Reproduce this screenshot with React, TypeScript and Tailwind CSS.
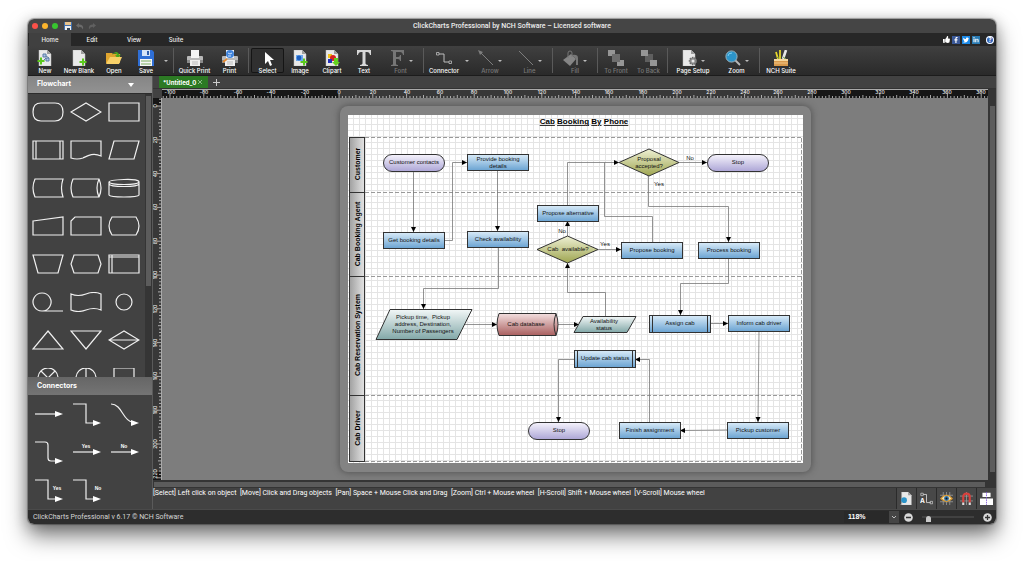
import type { ReactNode } from "react";
import { FaFacebookF, FaLinkedinIn, FaThumbsUp, FaTwitter } from "react-icons/fa";

const DocPage = ({ children }: { children?: ReactNode }) => (
  <svg viewBox="0 0 16 16" className="h-4 w-4" aria-hidden="true">
    <path d="M2 0h8l4 4v12H2z" fill="#e9e9e9" stroke="#bdbdbd" strokeWidth=".5" />
    <path d="M10 0v4h4z" fill="#9d9d9d" />
    {children}
  </svg>
);

const Icon = ({ children }: { children: ReactNode }) => (
  <svg viewBox="0 0 16 16" className="h-4 w-4" fill="none" aria-hidden="true">
    {children}
  </svg>
);

const Plus = ({ x, y }: { x: number; y: number }) => (
  <path d={`M${x - 3.5} ${y}h7M${x} ${y - 3.5}v7`} stroke="#5cc81e" strokeWidth="2" />
);

const Printer = ({ children }: { children?: ReactNode }) => (
  <Icon>
    <path d="M4 0h8v8H4z" fill="#f4f4f4" />
    <path d="M0 7q0-1 1-1h3v2h8V6h3q1 0 1 1v5H0z" fill="#b9b9b9" />
    <path d="M0 10h16v3H0z" fill="#8b8b8b" />
    <path d="M3 10h10v6H3z" fill="#efefef" />
    <path d="M5 12h6M5 14h6" stroke="#999" strokeWidth=".6" />
    {children}
  </Icon>
);

const icons = {
  new: (
    <DocPage>
      <path d="M6 4h3v3H6zM9 8h3v3H9zM6 11l3-3M9 6l3 2" stroke="#5b7ba5" strokeWidth="1" fill="#a9c3e2" />
      <Plus x={4} y={11} />
    </DocPage>
  ),
  newBlank: (
    <DocPage>
      <Plus x={12} y={12} />
    </DocPage>
  ),
  open: (
    <Icon>
      <path d="M0 3h6l1 1h7v9H0z" fill="#e0a52f" />
      <path d="M6 5c3-5 7-3 7 0l2-.5-3 4-3-3 2-.4c-1-2-3-2-5 0z" fill="#4aa81e" />
      <path d="M0 14 4 7h12l-3 7z" fill="#f8d068" />
    </Icon>
  ),
  save: (
    <Icon>
      <path d="M0 0h14l2 2v14H0z" fill="#2f6fd6" />
      <path d="M4 0h8v6H4z" fill="#d6e4f8" />
      <path d="M9 1h2v4H9z" fill="#2f5fae" />
      <path d="M2 9h12v7H2z" fill="#f6f6f6" />
      <path d="M3 11h10M3 14h10" stroke="#7cae5c" />
    </Icon>
  ),
  quickPrint: <Printer />,
  print: (
    <Printer>
      <circle cx="8" cy="4" r="4" fill="#3f83dc" />
      <path d="M6 3l2 1 2-1M6 6h3" stroke="#cfe4ff" />
      <path d="M1 12l4-3" stroke="#e8892c" strokeWidth="1.6" />
    </Printer>
  ),
  select: (
    <Icon>
      <path d="M5 2v12l3-3 2 5 2-1-2-5h4z" fill="#fff" />
    </Icon>
  ),
  image: (
    <DocPage>
      <path d="M4 5h7v6H4z" fill="#6ca9ee" />
      <circle cx="7" cy="8" r="2.4" fill="#1d5fc0" />
      <Plus x={12} y={12} />
    </DocPage>
  ),
  clipart: (
    <DocPage>
      <path d="M4 4h4v4H4z" fill="#f3c31b" />
      <circle cx="9" cy="8" r="3" fill="#d8231f" />
      <path d="M4 9h4v4H4z" fill="#2330b8" />
      <path d="M10 8h4v4h2l-4 4-4-4h2z" fill="#64d21e" />
    </DocPage>
  ),
  text: (
    <Icon>
      <path d="M1 0h14v5h-1q-.5-3-3-3H9.5v11.5q0 1.3 2.5 1.5v1H4v-1q2.5-.2 2.5-1.5V2H5Q2.5 2 2 5H1z" fill="#d8d8d8" />
    </Icon>
  ),
  font: (
    <Icon>
      <path d="M2 0h13v5h-1q-.5-3-3-3H7v5h2q2 0 2-2h1v6h-1q0-2-2-2H7v5q0 1 2 1v1H2v-1q2 0 2-1V2q0-1-2-1z" fill="#767676" />
    </Icon>
  ),
  connector: (
    <Icon>
      <path d="M3 4h5v8h5" stroke="#bdbdbd" />
      <path d="M.5 2.5H3V5H.5zM13 11h2.5v2.5H13z" stroke="#bdbdbd" strokeWidth=".8" />
    </Icon>
  ),
  arrow: (
    <Icon>
      <path d="M1 1l14 14" stroke="#7d7d7d" />
      <path d="M0 0l5 2-3 3z" fill="#7d7d7d" />
    </Icon>
  ),
  line: (
    <Icon>
      <path d="M1 1l14 14" stroke="#7d7d7d" />
    </Icon>
  ),
  fill: (
    <Icon>
      <path d="M0 10 8 4l5 5-6 7z" fill="#858585" />
      <path d="M5 8V3q0-2 2-2t2 2v4" stroke="#777" />
      <path d="M9 5q6-1 6 3v7h-2V9z" fill="#777" />
    </Icon>
  ),
  toFront: (
    <Icon>
      <path d="M0 0h7v6H0zM9 10h7v6H9z" fill="#969696" />
      <path d="M4 4h8v8H4z" fill="#6d6d6d" />
    </Icon>
  ),
  toBack: (
    <Icon>
      <path d="M4 4h8v8H4z" fill="#5f5f5f" />
      <path d="M0 0h7v6H0zM9 10h7v6H9z" fill="#969696" />
    </Icon>
  ),
  pageSetup: (
    <DocPage>
      <circle cx="12" cy="11" r="3.5" fill="#8d8d8d" stroke="#6b6b6b" strokeDasharray="1.5 1" strokeWidth="1.5" />
      <circle cx="12" cy="11" r="1.5" fill="#e6e6e6" />
    </DocPage>
  ),
  zoom: (
    <Icon>
      <path d="M10 10l5 5" stroke="#b9b9b9" strokeWidth="1.8" />
      <circle cx="6.5" cy="6.5" r="5.6" fill="#2c94c9" stroke="#9ab2bd" />
      <path d="M3 6q0-3 4-3" stroke="#7ed0f2" />
    </Icon>
  ),
  suite: (
    <Icon>
      <path d="M3 2l2 7M7 0v9" stroke="#e6d62a" strokeWidth="1.8" />
      <path d="M13 0 10 9" stroke="#e8e8e8" strokeWidth="2.6" />
      <path d="M4 7l3 3M10 7l3 2" stroke="#7aa64c" />
      <path d="M1 9h14v7H1z" fill="#d99a4c" />
      <path d="M1 9h14v2H1z" fill="#f6d9a0" />
      <path d="M1 13h14" stroke="#f0c485" />
    </Icon>
  ),
};

const Caret = () => (
  <svg viewBox="0 0 4 2" className="h-0.5 w-1 shrink-0" aria-hidden="true">
    <path d="M0 0h4L2 2z" fill="#bbb" />
  </svg>
);

type ToolProps = {
  icon: ReactNode;
  label: string;
  width: string;
  menu?: boolean;
  dim?: boolean;
  active?: boolean;
};

const Tool = ({ icon, label, width, menu, dim, active }: ToolProps) => (
  <button
    type="button"
    disabled={dim}
    className={`my-0.5 flex shrink-0 flex-col items-center whitespace-nowrap pt-0.5 ${width} ${
      dim ? "text-[#7a7a7a]" : "text-white"
    } ${active ? "rounded-xs bg-[#303030] ring-1 ring-inset ring-[#151515]" : ""}`}
  >
    <span className="flex items-center gap-1">
      {icon}
      {menu && (
        <span className="pt-1.5">
          <Caret />
        </span>
      )}
    </span>
    <span className="mt-px leading-2">{label}</span>
  </button>
);

const MenuCaret = ({ label, width }: { label: string; width: string }) => (
  <button type="button" aria-label={label} className={`flex shrink-0 items-center justify-center ${width}`}>
    <Caret />
  </button>
);

const Divider = () => <div className="mx-0.5 my-0.5 w-px shrink-0 bg-[#5a5a5a]" />;

const TitleBar = () => (
  <header className="grid h-3.5 grid-cols-[1fr_auto_1fr] items-center bg-[#454545]">
    <div className="flex items-center gap-1 pl-1">
      <button type="button" aria-label="Close" className="h-1.5 w-1.5 rounded-full bg-[#fb5149]" />
      <button type="button" aria-label="Minimize" className="h-1.5 w-1.5 rounded-full bg-[#fbb42c]" />
      <button type="button" aria-label="Full screen" className="h-1.5 w-1.5 rounded-full bg-[#38c52f]" />
      <button type="button" aria-label="Save" className="ml-0.5">
        <svg viewBox="0 0 8 8" className="h-2 w-2">
          <path d="M0 0h8v8H0z" fill="#3f6fae" />
          <path d="M1 0h6v3H1z" fill="#e8c38c" />
          <path d="M1 4h6v4H1z" fill="#eee" />
          <path d="M3 6h3v2H3z" fill="#345" />
        </svg>
      </button>
      <button type="button" aria-label="Undo">
        <svg viewBox="0 0 8 8" className="h-2 w-2">
          <path d="M0 3.5 3 1v1.5q5 0 4 5-1-3-4-2.8V6z" fill="#6b6b6b" />
        </svg>
      </button>
      <button type="button" aria-label="Redo">
        <svg viewBox="0 0 8 8" className="h-2 w-2">
          <path d="M8 3.5 5 1v1.5q-5 0-4 5 1-3 4-2.8V6z" fill="#606060" />
        </svg>
      </button>
    </div>
    <h1 className="font-[Roboto,sans-serif] text-[7px] font-medium text-[#eee]">
      ClickCharts Professional by NCH Software – Licensed software
    </h1>
  </header>
);

const MenuTabs = () => (
  <nav className="flex h-[13px] items-stretch bg-[#272727] pl-px">
    {["Home", "Edit", "View", "Suite"].map((tab, i) => (
      <button
        key={tab}
        type="button"
        className={`w-[42px] font-medium text-[#eee] ${i === 0 ? "bg-[#404040]" : ""}`}
      >
        {tab}
      </button>
    ))}
    <div className="ml-auto flex items-center gap-0.5 pr-0.5 text-white">
      <a href="#like" aria-label="Like" className="flex h-2 w-2 items-center justify-center">
        <FaThumbsUp size={7} />
      </a>
      <a href="#facebook" aria-label="Facebook" className="flex h-2 w-2 items-center justify-center bg-[#3b5998]">
        <FaFacebookF size={6} />
      </a>
      <a href="#twitter" aria-label="Twitter" className="flex h-2 w-2 items-center justify-center bg-[#1b8ae8]">
        <FaTwitter size={6} />
      </a>
      <a href="#linkedin" aria-label="LinkedIn" className="flex h-2 w-2 items-center justify-center bg-[#2a7cb5]">
        <FaLinkedinIn size={6} />
      </a>
      <button
        type="button"
        aria-label="Help"
        className="ml-1 flex h-2 w-2 items-center justify-center rounded-full bg-[#3465b8] font-bold ring-1 ring-inset ring-white"
      >
        ?
      </button>
    </div>
  </nav>
);

const Toolbar = () => (
  <div className="flex h-[30px] items-stretch border-b border-[#1c1c1c] bg-linear-to-b from-[#404040] to-[#2a2a2a] font-medium">
    <Tool icon={icons.new} label="New" width="w-[34px]" />
    <Tool icon={icons.newBlank} label="New Blank" width="w-[34px]" />
    <Tool icon={icons.open} label="Open" width="w-9" />
    <Tool icon={icons.save} label="Save" width="w-7" />
    <MenuCaret label="Save options" width="w-[11px]" />
    <Divider />
    <Tool icon={icons.quickPrint} label="Quick Print" width="w-[37px]" />
    <Tool icon={icons.print} label="Print" width="w-[33px]" />
    <Divider />
    <Tool icon={icons.select} label="Select" width="w-[33px]" active />
    <Tool icon={icons.image} label="Image" width="w-8" />
    <Tool icon={icons.clipart} label="Clipart" width="w-8" />
    <Tool icon={icons.text} label="Text" width="w-8" />
    <Tool icon={icons.font} label="Font" width="w-[41px]" menu dim />
    <Divider />
    <Tool icon={icons.connector} label="Connector" width="w-9" />
    <MenuCaret label="Connector options" width="w-[9px]" />
    <Tool icon={icons.arrow} label="Arrow" width="w-[38px]" menu dim />
    <Tool icon={icons.line} label="Line" width="w-[41px]" menu dim />
    <Divider />
    <Tool icon={icons.fill} label="Fill" width="w-10" menu dim />
    <Divider />
    <Tool icon={icons.toFront} label="To Front" width="w-8" dim />
    <Tool icon={icons.toBack} label="To Back" width="w-[33px]" dim />
    <Divider />
    <Tool icon={icons.pageSetup} label="Page Setup" width="w-[46px]" menu />
    <Tool icon={icons.zoom} label="Zoom" width="w-[41px]" menu />
    <Divider />
    <Tool icon={icons.suite} label="NCH Suite" width="w-[38px]" />
  </div>
);

// Outlines for the shape palette, each drawn in a 32x20 box.
const shapes: { name: string; d: string }[] = [
  { name: "Terminator", d: "M9 1h14q8 0 8 9t-8 9H9q-8 0-8-9t8-9z" },
  { name: "Decision", d: "M1 10 16 1l15 9-15 9z" },
  { name: "Process", d: "M1 1h30v18H1z" },
  { name: "Predefined process", d: "M1 1h30v18H1zM4 1v18M28 1v18" },
  { name: "Document", d: "M1 1h30v15c-8-4-14 0-18 2q-6 2-12 0z" },
  { name: "Data", d: "M6 1h25l-5 18H1z" },
  { name: "Stored data", d: "M3 1h28q-3 9 0 18H3Q-1 10 3 1z" },
  { name: "Direct storage", d: "M3 1h26q4 9 0 18H3Q-1 10 3 1zM29 1q-4 9 0 18" },
  { name: "Database", d: "M1 4q0-2 15-2.5T31 4v13q-1 2-15 2T1 17zM1 4q1 2.5 15 2.5T31 4M1 6q1 2.5 15 2.5T31 6" },
  { name: "Manual input", d: "M1 5 31 1v18H1z" },
  { name: "Card", d: "M5 1h26v18H1V5z" },
  { name: "Display", d: "M4 1h24q6 9 0 18H4Q-2 10 4 1z" },
  { name: "Manual operation", d: "M1 1h30l-5 18H6z" },
  { name: "Preparation", d: "M4 1h24l3 9-3 9H4l-3-9z" },
  { name: "Internal storage", d: "M1 1h30v18H1zM4 1v18M1 3h30" },
  { name: "Sequential data", d: "M10 19h21M10 19a9 9 0 1 1 .1 0" },
  { name: "Tape", d: "M1 2q7 3 15 0t15 0v16q-7-3-15 0t-15 0z" },
  { name: "Connector", d: "M8 10a8 8 0 1 1 16 0a8 8 0 1 1-16 0" },
  { name: "Extract", d: "M16 1 31 19H1z" },
  { name: "Merge", d: "M1 1h30L16 19z" },
  { name: "Sort", d: "M1 10 16 1l15 9-15 9zM1 10h30" },
  { name: "Summing junction", d: "M6 10a10 10 0 1 1 20 0a10 10 0 1 1-20 0M9 3l14 14M23 3 9 17" },
  { name: "Or", d: "M6 10a10 10 0 1 1 20 0a10 10 0 1 1-20 0M16 0v20M6 10h20" },
  { name: "Square", d: "M6 0h20v20H6z" },
];

const connectors: { name: string; d: string; tip: number; label?: string; lx?: number; ly?: number }[] = [
  { name: "Straight", d: "M3 19h20", tip: 19 },
  { name: "Elbow", d: "M3 9h13v19h7", tip: 28 },
  { name: "Curve", d: "M3 9c11 0 12 17 21 18", tip: 28 },
  { name: "Rounded elbow", d: "M3 9h10q3 0 3 3v13q0 3 3 3h4", tip: 28 },
  { name: "Straight yes", d: "M3 19h20", tip: 19, label: "Yes", lx: 16, ly: 15 },
  { name: "Straight no", d: "M3 19h20", tip: 19, label: "No", lx: 16, ly: 15 },
  { name: "Elbow yes", d: "M3 9h13v19h7", tip: 28, label: "Yes", lx: 25, ly: 19 },
  { name: "Elbow no", d: "M3 9h13v19h7", tip: 28, label: "No", lx: 28, ly: 19 },
];

const Palette = () => (
  <aside className="flex w-[124px] shrink-0 flex-col bg-[#424242]">
    <button
      type="button"
      className="flex h-[17px] items-center justify-between bg-linear-to-b from-[#858585] to-[#929292] pr-[18px] pl-[9px] text-[7px] font-bold text-white"
    >
      Flowchart
      <svg viewBox="0 0 6 4" className="h-1 w-1.5" aria-hidden="true">
        <path d="M0 0h6L3 4z" fill="#fff" />
      </svg>
    </button>
    <div className="flex h-[284px] overflow-hidden border-t border-[#2c2c2c]">
      <div className="grid flex-1 grid-cols-[repeat(3,32px)] content-start gap-x-1.5 gap-y-[18px] pt-2 pl-1">
        {shapes.map((s) => (
          <button key={s.name} type="button" aria-label={s.name}>
            <svg viewBox="0 0 32 20" className="block h-5 w-8" fill="none" stroke="#f0f0f0" strokeWidth="1.2">
              <path d={s.d} />
            </svg>
          </button>
        ))}
      </div>
      <div className="w-[7px] bg-[#353535] pt-0.5 pl-px">
        <div className="h-[190px] w-[5px] bg-[#5c5c5c]" />
      </div>
    </div>
    <h2 className="flex h-[18px] items-center bg-linear-to-b from-[#666] to-[#747474] pl-[9px] text-[7px] font-bold text-white">
      Connectors
    </h2>
    <div className="grid grid-cols-[repeat(3,32px)] gap-x-1.5 pl-1">
      {connectors.map((c) => (
        <button key={c.name} type="button" aria-label={c.name}>
          <svg viewBox="0 0 32 38" className="block h-[38px] w-8 overflow-visible" fill="none">
            <path d={c.d} stroke="#f0f0f0" strokeWidth="1.2" />
            <path d={`M23 ${c.tip - 3}l8 3-8 3z`} fill="#fff" />
            {c.label && (
              <text
                x={c.lx}
                y={c.ly}
                textAnchor="middle"
                fill="#fff"
                className="font-['Liberation_Sans',Arial,sans-serif] text-[5px] font-bold"
              >
                {c.label}
              </text>
            )}
          </svg>
        </button>
      ))}
    </div>
  </aside>
);

// One ruler unit is 1.69px at the current zoom.
const UNIT = 1.69;

const range = (from: number, to: number, step: number) =>
  Array.from({ length: Math.floor((to - from) / step) + 1 }, (_, i) => from + i * step);

const tickHeight = (v: number) => (v % 20 === 0 ? 4 : v % 10 === 0 ? 3 : 2);

const HorizontalRuler = () => (
  <div className="flex h-[9px] justify-center overflow-hidden border-t border-[#aaa] bg-[#161616]">
    <svg className="block h-2 w-[472px] shrink-0 overflow-visible bg-[#383838]">
      {range(-104, 384, 2).map((v) => (
        <path key={v} d={`M${v * UNIT} 8v-${tickHeight(v)}`} stroke="#ccc" strokeWidth=".8" />
      ))}
      {range(-100, 380, 20).map((v) => (
        <text key={v} x={Math.round(v * UNIT)} y="4" textAnchor="middle" fill="#eee" className="text-[5px] font-medium">
          {v}
        </text>
      ))}
    </svg>
  </div>
);

const VerticalRuler = () => (
  <div className="flex w-[9px] shrink-0 flex-col justify-center overflow-hidden border-r border-[#aaa] bg-[#161616]">
    <svg className="block h-[366px] w-2 shrink-0 overflow-visible bg-[#383838]">
      {range(-4, 220, 2).map((v) => (
        <path key={v} d={`M8 ${v * UNIT}h-${tickHeight(v)}`} stroke="#ccc" strokeWidth=".8" />
      ))}
      {range(0, 220, 20).map((v) => (
        <text
          key={v}
          transform={`translate(4 ${Math.min(Math.round(v * UNIT), 368)}) rotate(-90)`}
          textAnchor="middle"
          fill="#eee"
          className="text-[5px] font-medium"
        >
          {v}
        </text>
      ))}
    </svg>
  </div>
);

type Kind = "box" | "pill" | "sub" | "diamond";

const nodes: { kind: Kind; x: number; y: number; w: number; h: number; lines: string[] }[] = [
  { kind: "pill", x: 35, y: 39, w: 61, h: 17, lines: ["Customer contacts"] },
  { kind: "box", x: 119, y: 39, w: 61, h: 16, lines: ["Provide booking", "details"] },
  { kind: "diamond", x: 271, y: 34, w: 60, h: 27, lines: ["Proposal", "accepted?"] },
  { kind: "pill", x: 359, y: 39, w: 61, h: 17, lines: ["Stop"] },
  { kind: "box", x: 35, y: 117, w: 61, h: 16, lines: ["Get booking details"] },
  { kind: "box", x: 119, y: 116, w: 61, h: 16, lines: ["Check availability"] },
  { kind: "box", x: 189, y: 90, w: 61, h: 16, lines: ["Propose alternative"] },
  { kind: "diamond", x: 189, y: 121, w: 61, h: 27, lines: ["Cab  available?"] },
  { kind: "box", x: 273, y: 127, w: 61, h: 16, lines: ["Propose booking"] },
  { kind: "box", x: 350, y: 127, w: 61, h: 16, lines: ["Process booking"] },
  { kind: "sub", x: 301, y: 200, w: 61, h: 17, lines: ["Assign cab"] },
  { kind: "box", x: 380, y: 200, w: 61, h: 16, lines: ["Inform cab driver"] },
  { kind: "sub", x: 226, y: 235, w: 61, h: 17, lines: ["Update cab status"] },
  { kind: "pill", x: 180, y: 307, w: 61, h: 17, lines: ["Stop"] },
  { kind: "box", x: 271, y: 307, w: 61, h: 16, lines: ["Finish assignment"] },
  { kind: "box", x: 379, y: 307, w: 61, h: 16, lines: ["Pickup customer"] },
];

const links = [
  "M65.5 56V117",
  "M96 125.5h8.5V47.5H119",
  "M149.5 55.5V116",
  "M150.5 132V173.5H75.5V194",
  "M116 209.5H149",
  "M210 209.5H231",
  "M257.5 201V177.5H219.5V148",
  "M219.5 121V106",
  "M219.5 90V47.5H271",
  "M250 134.5H273",
  "M331 47.5H359",
  "M300.5 61V91.5H380.5V127",
  "M380.5 143V168.5H332.5V200",
  "M363 208.5H380",
  "M411 216L410 307",
  "M379 315L332 315.5",
  "M301.5 307V244.5H287",
  "M226 244.5H210.5V307",
];

const lanes = [
  { y: 22, h: 55, label: "Customer" },
  { y: 77, h: 84, label: "Cab Booking Agent" },
  { y: 161, h: 119, label: "Cab Reservation System" },
  { y: 280, h: 66, label: "Cab Driver" },
];

const Label = ({ x, y, lines }: { x: number; y: number; lines: string[] }) => (
  <text textAnchor="middle" fill="#111" className="whitespace-pre">
    {lines.map((line, i) => (
      <tspan key={line} x={x} y={y + 2 - (lines.length - 1) * 3 + i * 7}>
        {line}
      </tspan>
    ))}
  </text>
);

const Node = ({ kind, x, y, w, h, lines }: (typeof nodes)[number]) => {
  const cx = x + w / 2;
  const cy = y + h / 2;
  return (
    <g stroke="#333">
      {kind === "diamond" ? (
        <path d={`M${x} ${cy}L${cx} ${y}L${x + w} ${cy}L${cx} ${y + h}z`} fill="url(#olive)" />
      ) : (
        <rect
          x={x + 0.5}
          y={y + 0.5}
          width={w}
          height={h}
          rx={kind === "pill" ? h / 2 : 0}
          fill={kind === "pill" ? "url(#violet)" : "url(#blue)"}
        />
      )}
      {kind === "sub" && <path d={`M${x + 3.5} ${y}v${h}M${x + w - 2.5} ${y}v${h}`} />}
      <g stroke="none">
        <Label x={Math.round(cx)} y={Math.floor(cy)} lines={lines} />
      </g>
    </g>
  );
};

const Gradient = ({ id, from, to, flat }: { id: string; from: string; to: string; flat?: boolean }) => (
  <linearGradient id={id} x1="0" y1="0" x2={flat ? 1 : 0} y2={flat ? 0 : 1}>
    <stop offset="0" stopColor={from} />
    <stop offset="1" stopColor={to} />
  </linearGradient>
);

const Diagram = () => (
  <svg
    viewBox="0 0 455 348"
    role="img"
    aria-label="Cab Booking By Phone"
    className="block h-[348px] w-[455px] bg-white font-['Liberation_Sans',Arial,sans-serif] text-[6px]"
  >
    <defs>
      <pattern id="grid" width="6" height="6" patternUnits="userSpaceOnUse">
        <path d="M5.5 0V6M0 3.5H6" stroke="#e4e4e4" fill="none" />
      </pattern>
      <marker id="tip" markerUnits="userSpaceOnUse" markerWidth="6" markerHeight="6" refX="5" refY="2.5" orient="auto">
        <path d="M0 0 5 2.5 0 5z" fill="#000" />
      </marker>
      <Gradient id="blue" from="#d9ebf8" to="#6aa3d2" />
      <Gradient id="violet" from="#f6f4fc" to="#aca5d6" />
      <Gradient id="olive" from="#eef0d4" to="#9ea550" />
      <Gradient id="teal" from="#f2f7f7" to="#82a8a8" />
      <Gradient id="red" from="#f3dfdf" to="#a95f5f" />
      <Gradient id="lane" from="#a0a0a0" to="#e4e4e4" flat />
    </defs>
    <rect width="455" height="348" fill="url(#grid)" />
    <text x="236" y="9" textAnchor="middle" className="text-[8px] font-bold">
      <tspan className="underline">Cab</tspan> <tspan className="underline">Booking</tspan>{" "}
      <tspan className="underline">By</tspan> <tspan className="underline">Phone</tspan>
    </text>

    {lanes.map((lane) => (
      <g key={lane.label}>
        <path d={`M17 ${lane.y + 0.5}H453`} stroke="#999" strokeDasharray="4 2" />
        <rect x="1.5" y={lane.y + 0.5} width="15" height={lane.h} fill="url(#lane)" stroke="#333" />
        <text
          transform={`translate(12 ${Math.floor(lane.y + lane.h / 2)}) rotate(-90)`}
          textAnchor="middle"
          className="text-[7px] font-bold"
        >
          {lane.label}
        </text>
      </g>
    ))}
    <path d="M17 346.5H453.5V22" fill="none" stroke="#999" strokeDasharray="4 2" />

    {links.map((d) => (
      <path key={d} d={d} fill="none" stroke="#777" strokeWidth=".8" markerEnd="url(#tip)" />
    ))}
    <path d="M304.5 127V101.5H256.5V47.5" fill="none" stroke="#777" strokeWidth=".8" />

    {nodes.map((node) => (
      <Node key={`${node.x}-${node.y}`} {...node} />
    ))}
    <path d="M42 194.5H124L109 224.5H28z" fill="url(#teal)" stroke="#333" />
    <Label x={75} y={208} lines={["Pickup time,  Pickup", "address, Destination,", "Number of Passengers"]} />
    <path d="M151 198.5H208q4 11 0 22H151q-4-11 0-22z" fill="url(#red)" stroke="#333" />
    <path d="M208 198.5q-4 11 0 22" fill="none" stroke="#333" />
    <Label x={178} y={209} lines={["Cab database"]} />
    <path d="M235 201.5H288L279 217.5H226z" fill="url(#teal)" stroke="#333" />
    <Label x={256} y={209} lines={["Availability", "status"]} />

    <Label x={342} y={43} lines={["No"]} />
    <Label x={311} y={69} lines={["Yes"]} />
    <Label x={214} y={116} lines={["No"]} />
    <Label x={257} y={129} lines={["Yes"]} />
  </svg>
);

const viewToggles: { name: string; icon: ReactNode }[] = [
  { name: "Page preview", icon: (
    <DocPage>
      <circle cx="5" cy="10" r="3.5" fill="#2c94c9" />
      <path d="M3 13l-2 3" stroke="#ccc" />
    </DocPage>
  ) },
  { name: "Connector text", icon: (
    <Icon>
      <path d="M4 3h4v10h5" stroke="#ddd" />
      <path d="M1 1.5h3v3H1zM12.5 11.5h3v3h-3z" stroke="#ddd" strokeWidth=".8" />
      <text x="0" y="14" fill="#fff" className="text-[8px] font-bold">A</text>
    </Icon>
  ) },
  { name: "Show grid", icon: (
    <Icon>
      <path d="M4 0v16M8 0v16M12 0v16M0 4h16M0 12h16" stroke="#999" />
      <path d="M1 8q7-8 14 0-7 7-14 0z" fill="#f2e4b8" stroke="#d8962a" strokeWidth="1.4" />
      <circle cx="8" cy="8" r="3" fill="#2f6fa8" />
      <circle cx="8" cy="8" r="1.2" fill="#111" />
    </Icon>
  ) },
  { name: "Snap to grid", icon: (
    <Icon>
      <path d="M0 5h16M0 11h16M8 0v16" stroke="#999" />
      <path d="M4 13V6q0-4 4-4t4 4v7" stroke="#d8403c" strokeWidth="2.6" />
      <path d="M4 13v3M12 13v3" stroke="#ddd" strokeWidth="2.6" />
    </Icon>
  ) },
  { name: "Alignment guides", icon: (
    <Icon>
      <path d="M3 1h10v5H3zM0 8h16v8H0z" fill="#fff" />
      <path d="M8 0v16" stroke="#7a4fd8" strokeDasharray="2 1" />
    </Icon>
  ) },
];

const HintBar = () => (
  <div className="flex h-[21px] items-stretch bg-[#424242]">
    <p className="flex-1 pt-px font-[Roboto,sans-serif] text-[7px] leading-2 whitespace-pre text-white">
      {"[Select] Left click on object  [Move] Click and Drag objects  [Pan] Space + Mouse Click and Drag  [Zoom] Ctrl + Mouse wheel  [H-Scroll] Shift + Mouse wheel  [V-Scroll] Mouse wheel"}
    </p>
    {viewToggles.map((t) => (
      <button
        key={t.name}
        type="button"
        aria-label={t.name}
        className="flex w-5 items-center justify-center border-l border-[#2b2b2b] bg-[#484848] [&>svg]:h-[13px] [&>svg]:w-[13px]"
      >
        {t.icon}
      </button>
    ))}
  </div>
);

const Workspace = () => (
  <main className="flex min-w-0 flex-1 flex-col border-l border-[#5a5a5a]">
    <div className="flex h-3 items-stretch bg-[#424242] pl-1.5">
      <button type="button" className="flex w-[49px] items-center gap-0.5 bg-[#2c7a24] pl-1 font-bold text-white">
        *Untitled_0
        <svg viewBox="0 0 4 4" className="h-1 w-1" aria-hidden="true">
          <path d="M0 0l4 4M4 0 0 4" stroke="#a5cca1" strokeWidth=".8" />
        </svg>
      </button>
      <button type="button" aria-label="New tab" className="ml-[5px] flex items-center">
        <svg viewBox="0 0 7 7" className="h-[7px] w-[7px]">
          <path d="M3.5 0v7M0 3.5h7" stroke="#ccc" />
        </svg>
      </button>
    </div>
    <div className="h-px bg-[#333]" />
    <div className="flex">
      <div className="w-[9px] shrink-0 bg-[#424242]" />
      <div className="min-w-0 flex-1">
        <HorizontalRuler />
      </div>
      <div className="w-2 shrink-0 bg-[#353535]" />
    </div>
    <div className="flex">
      <VerticalRuler />
      <div className="flex min-w-0 flex-1 justify-center overflow-hidden bg-[#7d7d7d] py-2">
        <div className="rounded-lg bg-[#838383] px-2 py-[9px] shadow-[0_0_6px_1px_rgba(50,50,50,0.5)]">
          <Diagram />
        </div>
      </div>
      <div className="w-2 shrink-0 bg-[#353535] py-2 pl-0.5">
        <div className="h-full w-[5px] bg-[#5c5c5c]" />
      </div>
    </div>
    <div className="h-2 bg-[#353535] pt-0.5 pr-[11px] pl-px">
      <div className="h-[5px] bg-[#5c5c5c]" />
    </div>
    <HintBar />
  </main>
);

const StatusBar = () => (
  <footer className="flex h-[15px] items-center border-t border-[#4a4a4a] bg-[#2d2d2d] pr-1 pl-[5px] text-[#d5d5d5]">
    <span className="font-[Roboto,sans-serif] text-[7px] leading-3">ClickCharts Professional v 6.17 © NCH Software</span>
    <label className="relative ml-auto flex">
      <span className="sr-only">Zoom level</span>
      <select
        className="w-[55px] appearance-none overflow-visible bg-[#292929] py-px pl-1 font-['Liberation_Sans',Arial,sans-serif] text-[7px] font-bold text-white"
        defaultValue="118%"
      >
        <option>118%</option>
        <option>100%</option>
      </select>
      <span className="pointer-events-none absolute inset-y-0 right-0 flex w-2.5 items-center justify-center bg-[#454545]">
        <svg viewBox="0 0 4 2" className="h-0.5 w-1" fill="none" aria-hidden="true">
          <path d="M0 0l2 2 2-2" stroke="#ddd" strokeWidth=".8" />
        </svg>
      </span>
    </label>
    <button type="button" aria-label="Zoom out" className="ml-[5px]">
      <svg viewBox="0 0 9 9" className="block h-[9px] w-[9px]">
        <circle cx="4.5" cy="4.5" r="4.3" fill="#d9d9d9" />
        <path d="M2 4.5h5" stroke="#333" strokeWidth="1.3" />
      </svg>
    </button>
    <input
      type="range"
      aria-label="Zoom"
      min={0}
      max={100}
      defaultValue={8}
      className="mx-[9px] h-[9px] w-[52px] appearance-none bg-transparent [&::-webkit-slider-runnable-track]:h-0.5 [&::-webkit-slider-runnable-track]:bg-[#414141] [&::-webkit-slider-thumb]:h-1.5 [&::-webkit-slider-thumb]:w-[5px] [&::-webkit-slider-thumb]:appearance-none [&::-webkit-slider-thumb]:rounded-t-full [&::-webkit-slider-thumb]:bg-[#c9c9c9]"
    />
    <button type="button" aria-label="Zoom in">
      <svg viewBox="0 0 9 9" className="block h-[9px] w-[9px]">
        <circle cx="4.5" cy="4.5" r="4.3" fill="#d9d9d9" />
        <path d="M2 4.5h5M4.5 2v5" stroke="#333" strokeWidth="1.3" />
      </svg>
    </button>
  </footer>
);

export default function App() {
  return (
    <div className="min-h-screen bg-white px-7 pt-[19px] pb-9 font-[Inter,sans-serif] text-[6px]">
      <div className="overflow-hidden rounded-md shadow-[0_0_1px_1px_rgba(0,0,0,0.3),0_2px_14px_rgba(0,0,0,0.25),0_12px_22px_rgba(0,0,0,0.5)]">
        <TitleBar />
        <MenuTabs />
        <Toolbar />
        <div className="flex">
          <Palette />
          <Workspace />
        </div>
        <StatusBar />
      </div>
    </div>
  );
}
